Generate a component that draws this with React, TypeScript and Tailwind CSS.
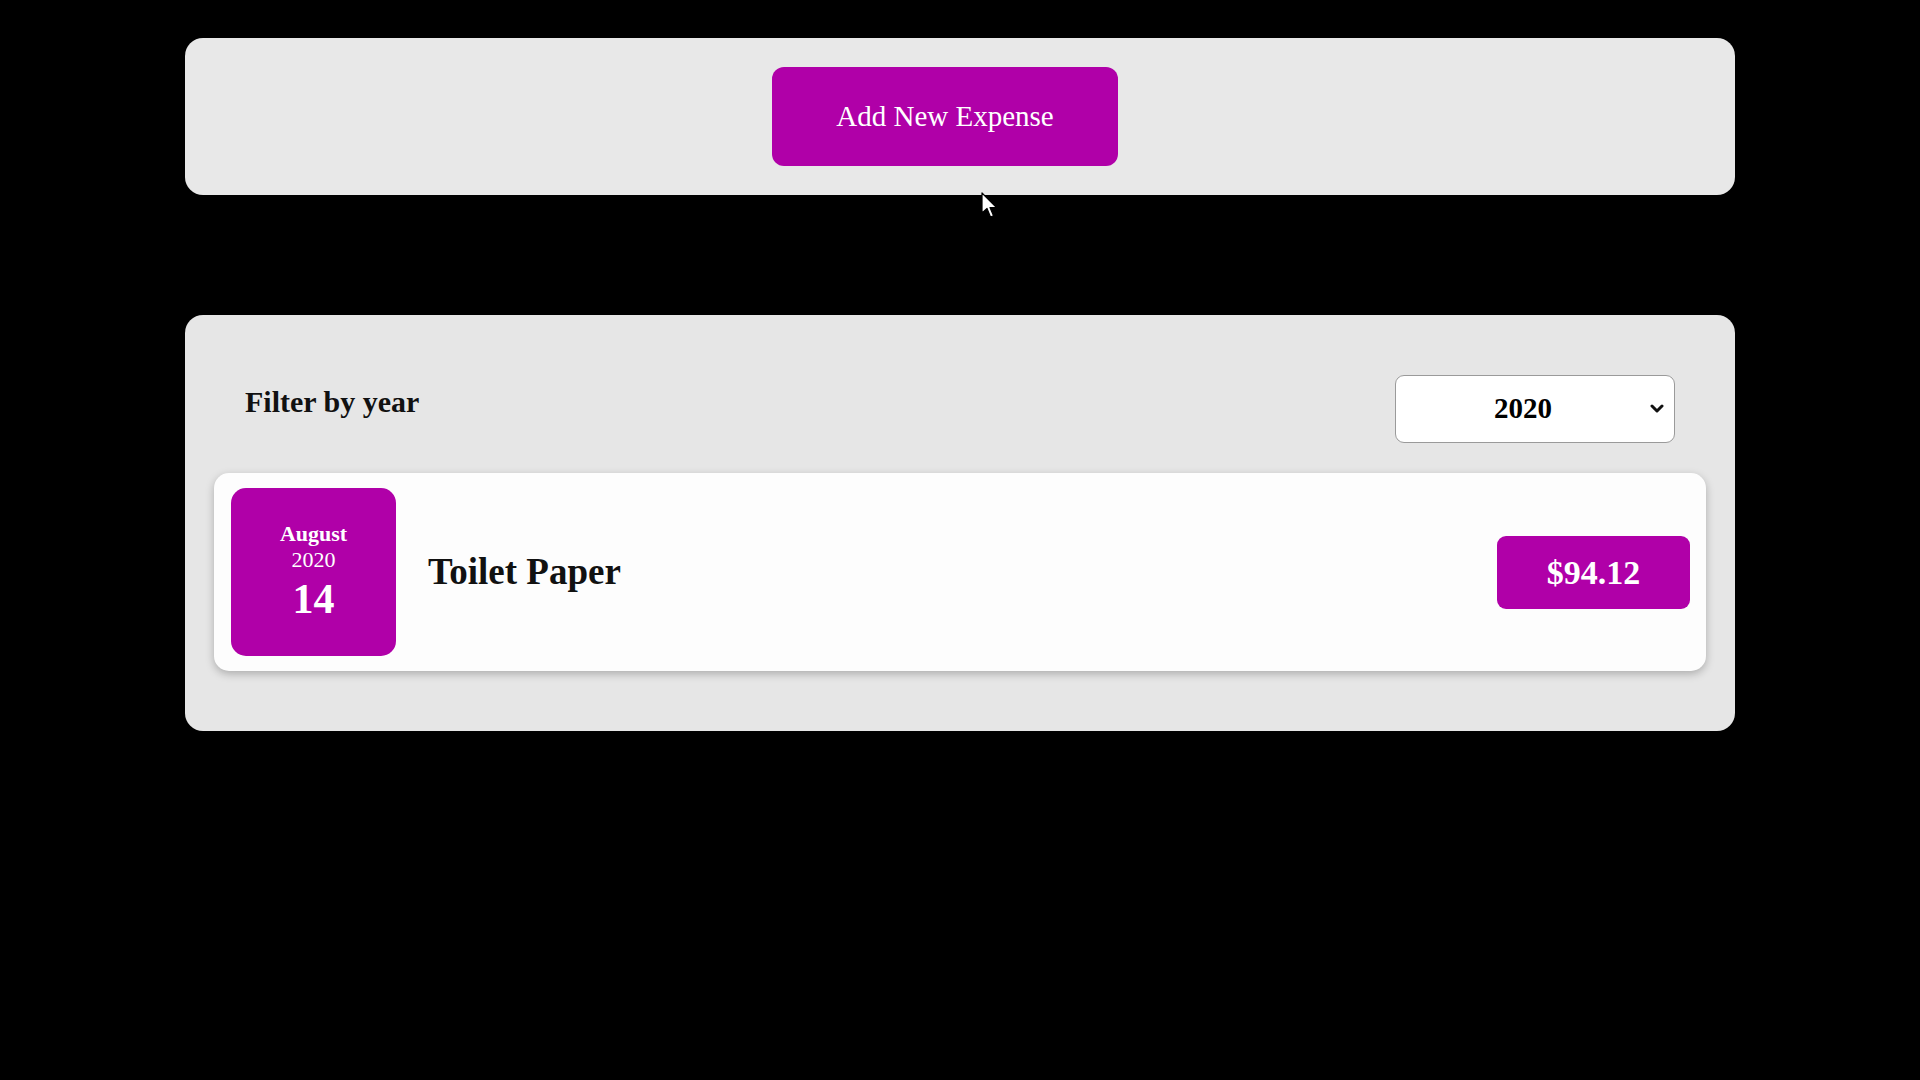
import React, { useState } from 'react';

const serif = { fontFamily: '"Liberation Serif", "Times New Roman", serif' };

const ExpenseDate: React.FC<{ month: string; year: string; day: string }> = ({ month, year, day }) => (
  <div className="flex h-[168px] w-[165px] shrink-0 flex-col items-center justify-center rounded-[15px] bg-[#b000a8] pt-[2px] text-white">
    <div className="text-[22px] font-bold leading-[26px]">{month}</div>
    <div className="text-[22px] leading-[26px]">{year}</div>
    <div className="text-[42px] font-bold leading-[52px]">{day}</div>
  </div>
);

const App: React.FC = () => {
  const [year, setYear] = useState('2020');

  return (
    <div className="relative min-h-[1080px] bg-black pt-[38px]" style={serif}>
      {/* new expense */}
      <div className="mx-auto flex w-[1550px] justify-center rounded-[18px] bg-[#e8e8e8] py-[29px]">
        <button className="mr-[30px] h-[99px] w-[346px] rounded-[12px] bg-[#b000a8] text-[29px] text-white">
          Add New Expense
        </button>
      </div>

      {/* expenses */}
      <div className="mx-auto mt-[120px] w-[1550px] rounded-[18px] bg-[#e6e6e6] px-[29px] pb-[60px] pt-[60px]">
        <div className="flex items-center justify-between pl-[31px] pr-[31px]">
          <label className="pb-[16px] text-[30px] font-bold text-[#111]">Filter by year</label>
          <div className="relative h-[68px] w-[280px]">
            <select
              value={year}
              onChange={e => setYear(e.target.value)}
              className="h-full w-full appearance-none rounded-[9px] border border-[#9a9a9a] bg-white pr-[24px] text-center text-[29px] font-bold text-black outline-none [text-align-last:center]"
            >
              <option value="2022">2022</option>
              <option value="2021">2021</option>
              <option value="2020">2020</option>
              <option value="2019">2019</option>
            </select>
            <svg className="pointer-events-none absolute right-[11px] top-[29px]" width="14" height="10" viewBox="0 0 14 10">
              <polyline points="2,2 7,7 12,2" fill="none" stroke="#111" strokeWidth="3" strokeLinecap="round" strokeLinejoin="round" />
            </svg>
          </div>
        </div>

        <ul className="mt-[30px]">
          <li className="flex items-center rounded-[15px] bg-[#fdfdfd] py-[15px] pl-[17px] pr-[16px] shadow-[0_3px_8px_rgba(0,0,0,0.25)]">
            <ExpenseDate month="August" year="2020" day="14" />
            <div className="flex flex-1 items-center justify-between pl-[32px]">
              <h2 className="text-[37px] font-bold text-[#111]">Toilet Paper</h2>
              <div className="flex h-[73px] w-[193px] items-center justify-center rounded-[9px] bg-[#b000a8] text-[34px] font-bold text-white">
                $94.12
              </div>
            </div>
          </li>
        </ul>
      </div>

      {/* mouse pointer */}
      <svg className="pointer-events-none absolute left-[981px] top-[192px]" width="17" height="27" viewBox="0 0 17 27">
        <path d="M1 1 L1 21 L6 16.5 L9.5 25 L12.5 23.8 L9 15.5 L15.5 15.5 Z" fill="#fff" stroke="#000" strokeWidth="1.2" strokeLinejoin="round" />
      </svg>
    </div>
  );
};

export default App;
